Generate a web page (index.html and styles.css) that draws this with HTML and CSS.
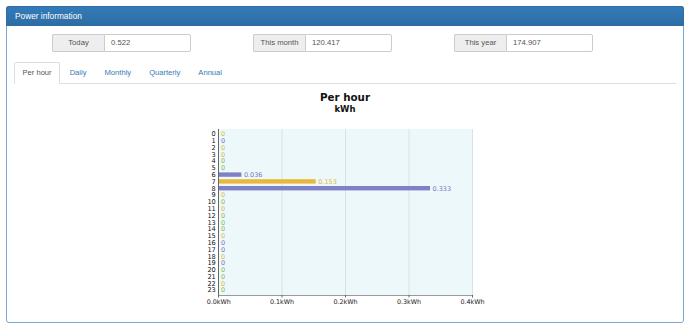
FILE: index.html
```html
<!DOCTYPE html>
<html lang="en">
<head>
    <meta charset="UTF-8">
    <title>Power information</title>
    <link rel="stylesheet" href="styles.css">
</head>
<body>
<div class="panel">
    <div class="panel-heading">Power information</div>
    <div class="panel-body">
        <div class="stats">
            <div class="input-group"><span class="addon">Today</span><span class="value">0.522</span></div>
            <div class="input-group"><span class="addon">This month</span><span class="value">120.417</span></div>
            <div class="input-group"><span class="addon">This year</span><span class="value">174.907</span></div>
        </div>
        <ul class="tabs">
            <li class="tab active">Per hour</li>
            <li class="tab">Daily</li>
            <li class="tab">Monthly</li>
            <li class="tab">Quarterly</li>
            <li class="tab">Annual</li>
        </ul>
        <svg class="chart" width="300" height="230" viewBox="195 84 300 230">
            <text class="title" x="345" y="100.7">Per hour</text>
            <text class="subtitle" x="345" y="112.3">kWh</text>

            <rect class="plot" x="218.5" y="129" width="254" height="166"/>
            <line class="grid" x1="282" y1="129" x2="282" y2="295"/>
            <line class="grid" x1="345.5" y1="129" x2="345.5" y2="295"/>
            <line class="grid" x1="409" y1="129" x2="409" y2="295"/>
            <line class="grid" x1="472.5" y1="129" x2="472.5" y2="295"/>

            <g class="rows">
                <text x="215.8" y="136.3">0</text>
                <text x="215.8" y="143.1">1</text>
                <text x="215.8" y="149.9">2</text>
                <text x="215.8" y="156.7">3</text>
                <text x="215.8" y="163.4">4</text>
                <text x="215.8" y="170.2">5</text>
                <text x="215.8" y="177.0">6</text>
                <text x="215.8" y="183.8">7</text>
                <text x="215.8" y="190.6">8</text>
                <text x="215.8" y="197.4">9</text>
                <text x="215.8" y="204.2">10</text>
                <text x="215.8" y="211.0">11</text>
                <text x="215.8" y="217.7">12</text>
                <text x="215.8" y="224.5">13</text>
                <text x="215.8" y="231.3">14</text>
                <text x="215.8" y="238.1">15</text>
                <text x="215.8" y="244.9">16</text>
                <text x="215.8" y="251.7">17</text>
                <text x="215.8" y="258.5">18</text>
                <text x="215.8" y="265.3">19</text>
                <text x="215.8" y="272.0">20</text>
                <text x="215.8" y="278.8">21</text>
                <text x="215.8" y="285.6">22</text>
                <text x="215.8" y="292.4">23</text>
            </g>

            <rect class="bar purple" x="219" y="172.4" width="22.4" height="4.4"/>
            <rect class="bar yellow" x="219" y="179.2" width="96.7" height="4.4"/>
            <rect class="bar purple" x="219" y="186.0" width="211" height="4.4"/>

            <g class="values">
                <text class="y" x="221" y="136.3">0</text>
                <text class="p" x="221" y="143.1">0</text>
                <text class="y" x="221" y="149.9">0</text>
                <text class="y" x="221" y="156.7">0</text>
                <text class="g" x="221" y="163.4">0</text>
                <text class="g" x="221" y="170.2">0</text>
                <text class="p" x="243.9" y="177.0">0.036</text>
                <text class="y" x="318.2" y="183.8">0.153</text>
                <text class="p" x="432.5" y="190.6">0.333</text>
                <text class="y" x="221" y="197.4">0</text>
                <text class="g" x="221" y="204.2">0</text>
                <text class="y" x="221" y="211.0">0</text>
                <text class="g" x="221" y="217.7">0</text>
                <text class="g" x="221" y="224.5">0</text>
                <text class="g" x="221" y="231.3">0</text>
                <text class="y" x="221" y="238.1">0</text>
                <text class="p" x="221" y="244.9">0</text>
                <text class="p" x="221" y="251.7">0</text>
                <text class="y" x="221" y="258.5">0</text>
                <text class="p" x="221" y="265.3">0</text>
                <text class="g" x="221" y="272.0">0</text>
                <text class="g" x="221" y="278.8">0</text>
                <text class="y" x="221" y="285.6">0</text>
                <text class="g" x="221" y="292.4">0</text>
            </g>

            <line class="axis" x1="218.5" y1="129" x2="218.5" y2="295.5"/>
            <line class="axis-x" x1="218" y1="295.5" x2="473" y2="295.5"/>
            <line class="tick" x1="218.5" y1="295" x2="218.5" y2="297.5"/>
            <line class="tick" x1="282" y1="295" x2="282" y2="297.5"/>
            <line class="tick" x1="345.5" y1="295" x2="345.5" y2="297.5"/>
            <line class="tick" x1="409" y1="295" x2="409" y2="297.5"/>
            <line class="tick" x1="472.5" y1="295" x2="472.5" y2="297.5"/>

            <g class="ticks">
                <text x="218.8" y="303.7">0.0kWh</text>
                <text x="282" y="303.7">0.1kWh</text>
                <text x="345.5" y="303.7">0.2kWh</text>
                <text x="409" y="303.7">0.3kWh</text>
                <text x="472.5" y="303.7">0.4kWh</text>
            </g>
        </svg>
    </div>
</div>
</body>
</html>
```

FILE: styles.css
```css
body { margin: 0; padding: 6px; background-color: #ffffff; font-family: "Liberation Sans", Arial, sans-serif; font-size: 8px; color: #333333; }
.panel { border: 1px solid #7aa7d4; border-radius: 3px; background-color: #ffffff; }
.panel-heading { height: 19px; line-height: 19px; padding-left: 8px; margin: -1px -1px 0; border: 1px solid #2e6da4; border-bottom: 0; border-radius: 3px 3px 0 0; background: linear-gradient(#347bb8, #2d6ca3); color: #ffffff; font-size: 8.3px; }
.panel-body { padding: 8px 7px 8px; }

.stats { display: flex; gap: 62px; padding-left: 38px; height: 18px; }
.input-group { display: flex; width: 139px; height: 18px; }
.addon { width: 52px; box-sizing: border-box; border: 1px solid #cccccc; border-right: 0; border-radius: 2px 0 0 2px; background-color: #eeeeee; text-align: center; line-height: 16px; color: #555555; font-size: 7.7px; }
.value { flex: 1; border: 1px solid #cccccc; border-radius: 0 2px 2px 0; padding-left: 6px; line-height: 16px; color: #555555; font-size: 7.7px; }

.tabs { display: flex; margin: 10px 0 0; padding: 0; list-style: none; border-bottom: 1px solid #dddddd; font-size: 7.6px; }
.tab { margin: 0 1px -1px 0; padding: 0 7.5px; line-height: 20px; border: 1px solid transparent; border-radius: 2px 2px 0 0; color: #337ab7; }
.tab.active { border-color: #dddddd; border-bottom-color: #ffffff; background-color: #ffffff; color: #555555; }

.chart { display: block; margin: 0 auto; font-family: "DejaVu Sans", Verdana, sans-serif; }
.chart .title { font-size: 10.3px; font-weight: bold; text-anchor: middle; fill: #111111; }
.chart .subtitle { font-size: 8.5px; font-weight: bold; text-anchor: middle; fill: #111111; }
.plot { fill: #edf8fa; }
.grid { stroke: #d6e4e8; stroke-width: 1; }
.axis { stroke: #666666; stroke-width: 1; }
.axis-x { stroke: #999999; stroke-width: 1; }
.tick { stroke: #666666; stroke-width: 1; }
.rows text { font-size: 6.6px; text-anchor: end; fill: #111111; }
.values text { font-size: 6.5px; }
.values .p { fill: #7878c4; }
.values .y { fill: #e0b840; }
.values .g { fill: #86bc58; }
.bar.purple { fill: #8080c6; }
.bar.yellow { fill: #e8b83a; }
.ticks text { font-size: 6.4px; text-anchor: middle; fill: #222222; }
```
